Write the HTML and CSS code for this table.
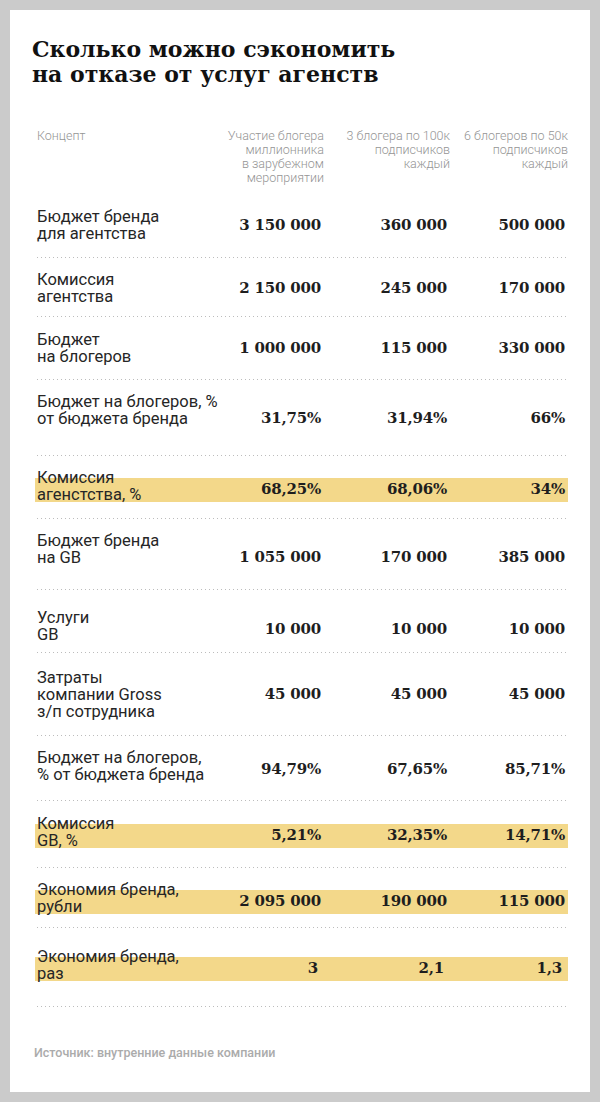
FILE: index.html
```html
<!DOCTYPE html>
<html lang="ru">
<head>
<meta charset="utf-8">
<title>Сколько можно сэкономить на отказе от услуг агенств</title>
<link rel="stylesheet" href="styles.css">
</head>
<body>
<div class="card">
  <h1 class="title">Сколько можно сэкономить<br>на отказе от услуг агенств</h1>

  <div class="grid head">
    <div class="hcell first">Концепт</div>
    <div class="hcell">Участие блогера<br>миллионника<br>в зарубежном<br>мероприятии</div>
    <div class="hcell">3 блогера по 100к<br>подписчиков<br>каждый</div>
    <div class="hcell">6 блогеров по 50к<br>подписчиков<br>каждый</div>
  </div>

  <div class="table">
    <div class="row r1"><div class="grid cells">
      <div class="label">Бюджет бренда<br>для агентства</div>
      <div class="num">3 150 000</div><div class="num">360 000</div><div class="num">500 000</div>
    </div></div>
    <div class="row r2"><div class="grid cells">
      <div class="label">Комиссия<br>агентства</div>
      <div class="num">2 150 000</div><div class="num">245 000</div><div class="num">170 000</div>
    </div></div>
    <div class="row r3"><div class="grid cells">
      <div class="label">Бюджет<br>на блогеров</div>
      <div class="num">1 000 000</div><div class="num">115 000</div><div class="num">330 000</div>
    </div></div>
    <div class="row r4"><div class="grid cells end">
      <div class="label">Бюджет на блогеров, %<br>от бюджета бренда</div>
      <div class="num">31,75%</div><div class="num">31,94%</div><div class="num">66%</div>
    </div></div>
    <div class="row r5"><div class="grid cells hl lo">
      <div class="label">Комиссия<br>агенстства, %</div>
      <div class="num">68,25%</div><div class="num">68,06%</div><div class="num">34%</div>
    </div></div>
    <div class="row r6"><div class="grid cells end">
      <div class="label">Бюджет бренда<br>на GB</div>
      <div class="num">1 055 000</div><div class="num">170 000</div><div class="num">385 000</div>
    </div></div>
    <div class="row r7"><div class="grid cells lo">
      <div class="label">Услуги<br>GB</div>
      <div class="num">10 000</div><div class="num">10 000</div><div class="num">10 000</div>
    </div></div>
    <div class="row r8"><div class="grid cells">
      <div class="label">Затраты<br>компании Gross<br>з/п сотрудника</div>
      <div class="num">45 000</div><div class="num">45 000</div><div class="num">45 000</div>
    </div></div>
    <div class="row r9"><div class="grid cells lo">
      <div class="label">Бюджет на блогеров,<br>% от бюджета бренда</div>
      <div class="num">94,79%</div><div class="num">67,65%</div><div class="num">85,71%</div>
    </div></div>
    <div class="row r10"><div class="grid cells hl lo">
      <div class="label">Комиссия<br>GB, %</div>
      <div class="num">5,21%</div><div class="num">32,35%</div><div class="num">14,71%</div>
    </div></div>
    <div class="row r11"><div class="grid cells hl lo">
      <div class="label">Экономия бренда,<br>рубли</div>
      <div class="num">2 095 000</div><div class="num">190 000</div><div class="num">115 000</div>
    </div></div>
    <div class="row r12"><div class="grid cells hl lo short">
      <div class="label">Экономия бренда,<br>раз</div>
      <div class="num">3</div><div class="num">2,1</div><div class="num">1,3</div>
    </div></div>
  </div>

  <p class="source">Источник: внутренние данные компании</p>
</div>
</body>
</html>
```

FILE: styles.css
```css
* {
  box-sizing: border-box;
}

html,
body {
  margin: 0;
  background: #cbcbcb;
}

body {
  padding: 10px;
  font-family: Roboto, "Noto Sans", "Liberation Sans", sans-serif;
  color: #222;
}

.card {
  background: #fff;
  padding: 27px 22px 31px 27px;
}

.title {
  margin: 0 0 42px -5px;
  font-family: "DejaVu Serif", "Liberation Serif", serif;
  font-weight: bold;
  font-size: 22px;
  line-height: 25px;
  color: #111;
}

.grid {
  display: grid;
  grid-template-columns: minmax(0, 1fr) 130px 126px 118px;
}

.head {
  margin-bottom: 10px;
}

.hcell {
  font-weight: 300;
  font-size: 12.5px;
  line-height: 14px;
  color: #959595;
  text-align: right;
  white-space: nowrap;
}

.hcell.first {
  text-align: left;
}

.table {
  display: flex;
  flex-direction: column;
}

.row {
  padding: 13px 0 16px;
  background: repeating-linear-gradient(90deg, #bcbcbc 0 1px, transparent 1px 4px) left bottom / 529px 1px no-repeat;
}

.cells {
  align-items: center;
}

.label {
  font-size: 16.5px;
  line-height: 17px;
  color: #262626;
  white-space: nowrap;
}

.num {
  font-family: "DejaVu Serif", "Liberation Serif", serif;
  font-weight: bold;
  font-size: 15px;
  line-height: 17px;
  letter-spacing: -0.2px;
  color: #1e1e1e;
  text-align: right;
  white-space: nowrap;
  padding-right: 3px;
}

.cells.end .num {
  align-self: end;
}

.cells.lo .num {
  padding-top: 6px;
}

.cells.short .num {
  padding-right: 6px;
}

.hl {
  margin-left: -2px;
  padding-left: 2px;
  background: linear-gradient(transparent 9px, #f3d88a 9px 33px, transparent 33px);
}

.r2 { padding-bottom: 12px; }
.r3 { padding-top: 14px; padding-bottom: 15px; }
.r4 { padding-bottom: 29px; }
.r6 { padding-bottom: 24px; }
.r7 { padding-top: 19px; padding-bottom: 10px; }
.r8 { padding-top: 16px; }
.r9 { padding-bottom: 18px; }
.r10 { padding-top: 14px; padding-bottom: 19px; }
.r11 { padding-bottom: 13px; }
.r12 { padding-top: 20px; padding-bottom: 25px; }

.source {
  margin: 38px 0 0 -3px;
  font-weight: 500;
  font-size: 12.5px;
  line-height: 16px;
  color: #ababab;
}
```
